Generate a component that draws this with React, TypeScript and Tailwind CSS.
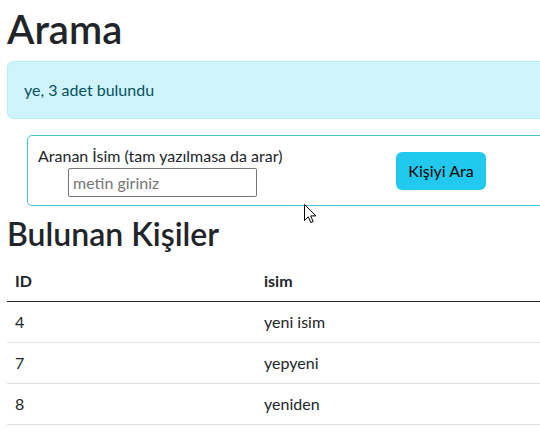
import React from 'react';

const people = [
  { id: 4, name: 'yeni isim' },
  { id: 7, name: 'yepyeni' },
  { id: 8, name: 'yeniden' },
];

const Cursor = () => (
  <svg
    className="absolute left-[304px] top-[204px]"
    width="13"
    height="20"
    viewBox="0 0 13 20"
  >
    <path
      d="M0.5 0.5 L0.5 16.5 L4.3 12.8 L6.8 18.6 L9.2 17.6 L6.7 11.9 L12 11.9 Z"
      fill="#fff"
      stroke="#000"
      strokeWidth="1"
      strokeLinejoin="round"
    />
  </svg>
);

export default function App() {
  return (
    <div className="relative h-[435px] w-[540px] overflow-hidden bg-white font-['Lato',sans-serif] text-[#212529]">
      <div className="w-[640px] pl-[7px]">
        <h1 className="mb-2 pt-[5px] text-[40px] font-semibold leading-[1.2]">Arama</h1>

        {/* Alert */}
        <div className="mb-4 rounded-md border border-[#b6effb] bg-[#cff4fc] p-4 text-base leading-6 text-[#055160]">
          ye, 3 adet bulundu
        </div>

        {/* Search form */}
        <div className="ml-5 flex h-[71px] items-center rounded-[5px] border border-[#3fc2da] pl-[10px]">
          <div className="flex w-[358px] flex-col">
            <label className="text-base leading-6">Aranan İsim (tam yazılmasa da arar)</label>
            <input
              type="text"
              placeholder="metin giriniz"
              className="ml-[30px] h-[29px] w-[189px] rounded-[2px] border border-[#767676] px-[4px] text-base text-[#212529] outline-none placeholder:text-[#757575]"
            />
          </div>
          <button className="h-[38px] w-[90px] rounded-md bg-[#22c9ef] text-base text-black">
            Kişiyi Ara
          </button>
        </div>

        <h2 className="mb-2 mt-[9px] text-[32px] font-semibold leading-[1.2]">Bulunan Kişiler</h2>

        {/* Results table */}
        <table className="w-full table-fixed border-collapse text-base leading-6">
          <colgroup>
            <col className="w-[249px]" />
            <col />
          </colgroup>
          <thead>
            <tr>
              <th className="border-b border-[#212529] px-2 py-2 text-left font-bold">ID</th>
              <th className="border-b border-[#212529] px-2 py-2 text-left font-bold">isim</th>
            </tr>
          </thead>
          <tbody>
            {people.map((p) => (
              <tr key={p.id}>
                <td className="border-b border-[#dee2e6] px-2 py-2">{p.id}</td>
                <td className="border-b border-[#dee2e6] px-2 py-2">{p.name}</td>
              </tr>
            ))}
          </tbody>
        </table>
      </div>
      <Cursor />
    </div>
  );
}
